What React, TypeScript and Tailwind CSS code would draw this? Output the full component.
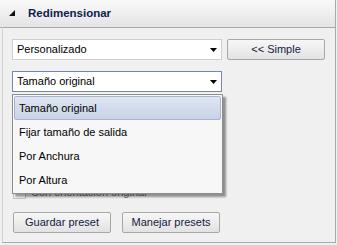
import React from 'react';

const font = { fontFamily: '"Liberation Sans", Arial, sans-serif' };

const Arrow = () => (
  <svg width="7" height="4" viewBox="0 0 7 4" className="shrink-0">
    <polygon points="0,0 7,0 3.5,4" fill="#000" />
  </svg>
);

const items = ['Tamaño original', 'Fijar tamaño de salida', 'Por Anchura', 'Por Altura'];

const Btn = ({ label, w }: { label: string; w: string }) => (
  <button
    className={`${w} h-[21px] flex items-center justify-center rounded-[2px] border border-[#a7a7a7] bg-gradient-to-b from-[#f7f7f7] to-[#e2e2e2] text-[11px] text-[#14203f]`}
  >
    {label}
  </button>
);

export default function App() {
  return (
    <div className="w-[337px] h-[245px] bg-[#f0f0f0] text-black" style={font}>
      {/* Header */}
      <div className="h-[28px] flex items-center border-b border-r border-[#a9a9a9] bg-gradient-to-b from-[#f9f9f9] to-[#e4e4e4] w-[336px]">
        <svg width="7" height="7" viewBox="0 0 7 7" className="ml-[9px]">
          <polygon points="6,0 6,6 0,6" fill="#111" />
        </svg>
        <span className="ml-[12px] text-[11.5px] font-bold text-[#0f1d4d]">Redimensionar</span>
      </div>

      {/* Body */}
      <div className="w-[336px] h-[216px] border-l border-l-[#d2d2d2] border-r border-b border-r-[#a9a9a9] border-b-[#a9a9a9] ml-[2px] -mt-px pl-[9px] pt-[12px]" style={{ width: 334 }}>
        <div className="flex items-center gap-[5px]">
          <div className="w-[210px] h-[21px] flex items-center justify-between bg-white border border-[#cfcfcf] pl-[4px] pr-[4px] text-[11px]">
            <span>Personalizado</span>
            <Arrow />
          </div>
          <Btn label="<< Simple" w="w-[98px]" />
        </div>

        <div className="relative mt-[11px] w-[210px]">
          <div className="h-[21px] flex items-center justify-between bg-white border border-[#7686b4] pl-[4px] pr-[4px] text-[11px]">
            <span>Tamaño original</span>
            <Arrow />
          </div>
          <div className="absolute left-0 top-[23px] w-[211px] z-10 border border-[#8d8d8d] bg-[#f7f7f7] shadow-[3px_3px_2px_rgba(0,0,0,0.4)] px-px py-px">
            {items.map((t, i) => (
              <div
                key={t}
                className={`h-[24px] flex items-center pl-[4px] text-[11px] ${
                  i === 0
                    ? 'rounded-[2px] border border-[#a7b5cf] bg-gradient-to-b from-[#dfe6f1] to-[#c7d3e6]'
                    : 'border border-transparent'
                }`}
              >
                {t}
              </div>
            ))}
          </div>

          <div className="h-[92px]" />
          <div className="flex items-center gap-[5px] pl-px">
            <div className="w-[13px] h-[13px] bg-white border border-[#c5c5c5]" />
            <span className="text-[11px] text-[#6b6b6b]">Con orientación original</span>
          </div>
        </div>

        <div className="flex gap-[11px] mt-[11px] pl-px">
          <Btn label="Guardar preset" w="w-[98px]" />
          <Btn label="Manejar presets" w="w-[98px]" />
        </div>
      </div>
    </div>
  );
}
